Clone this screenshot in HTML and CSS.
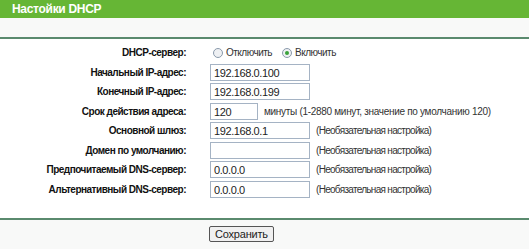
FILE: index.html
```html
<!DOCTYPE html>
<html lang="ru">
<head>
    <meta charset="UTF-8" />
    <title>Настойки DHCP</title>
    <link rel="stylesheet" href="styles.css">
</head>
<body>
    <div class="panel">
        <div class="title">Настойки DHCP</div>
        <div class="band"></div>

        <div class="form">
            <div class="row">
                <label>DHCP-сервер:</label>
                <div class="field">
                    <span class="radio"></span><span class="opt">Отключить</span>
                    <span class="radio checked"></span><span class="opt">Включить</span>
                </div>
            </div>
            <div class="row">
                <label>Начальный IP-адрес:</label>
                <div class="field"><input type="text" value="192.168.0.100"></div>
            </div>
            <div class="row">
                <label>Конечный IP-адрес:</label>
                <div class="field"><input type="text" value="192.168.0.199"></div>
            </div>
            <div class="row">
                <label>Срок действия адреса:</label>
                <div class="field"><input type="text" class="short" value="120"><span class="note minutes">минуты (1-2880 минут, значение по умолчанию 120)</span></div>
            </div>
            <div class="row">
                <label>Основной шлюз:</label>
                <div class="field"><input type="text" value="192.168.0.1"><span class="note">(Необязательная настройка)</span></div>
            </div>
            <div class="row">
                <label>Домен по умолчанию:</label>
                <div class="field"><input type="text" value=""><span class="note">(Необязательная настройка)</span></div>
            </div>
            <div class="row">
                <label>Предпочитаемый DNS-сервер:</label>
                <div class="field"><input type="text" value="0.0.0.0"><span class="note">(Необязательная настройка)</span></div>
            </div>
            <div class="row">
                <label>Альтернативный DNS-сервер:</label>
                <div class="field"><input type="text" value="0.0.0.0"><span class="note">(Необязательная настройка)</span></div>
            </div>
        </div>

        <div class="footer">
            <button>Сохранить</button>
        </div>
    </div>
</body>
</html>
```

FILE: styles.css
```css
body {
    margin: 0;
    background: #fff;
    font-family: "Liberation Sans", Arial, sans-serif;
    font-size: 10px;
    color: #000;
}

.panel {
    width: 529px;
}

/* Заголовок */
.title {
    height: 18px;
    line-height: 19px;
    background: #66b635;
    color: #fff;
    font-size: 12px;
    font-weight: bold;
    letter-spacing: -0.3px;
    padding-left: 12px;
}

.band {
    height: 19px;
    background: #f8f9f8;
    border-bottom: 2px solid #5a8a6e;
}

/* Форма */
.form {
    padding-top: 4px;
    height: 175px;
}

.row {
    display: flex;
    align-items: center;
    height: 19.5px;
}

.row label {
    width: 186px;
    text-align: right;
    font-weight: bold;
    letter-spacing: -0.5px;
    color: #111;
}

.field {
    display: flex;
    align-items: center;
    padding-left: 24px;
    white-space: nowrap;
}

input {
    width: 100px;
    height: 17px;
    box-sizing: border-box;
    border: 1px solid #a5b3c4;
    padding: 1px 3px 0;
    font-family: "Liberation Sans", Arial, sans-serif;
    font-size: 11px;
    letter-spacing: -0.4px;
    color: #222;
}

input.short {
    width: 48px;
}

.note {
    margin-left: 6px;
    letter-spacing: -0.7px;
    color: #333;
}

.note.minutes {
    letter-spacing: -0.3px;
}

.radio {
    width: 8px;
    height: 8px;
    border: 1px solid #8a9aab;
    border-radius: 50%;
    background: #eef0f3;
    margin: 0 3px 0 3px;
    position: relative;
}

.radio.checked::after {
    content: "";
    position: absolute;
    left: 2px;
    top: 2px;
    width: 4px;
    height: 4px;
    border-radius: 50%;
    background: #3aa23a;
}

.opt {
    margin-right: 7px;
    letter-spacing: -0.5px;
    color: #333;
}

/* Кнопка */
.footer {
    border-top: 2px solid #5a8a6e;
    background: #f8f9f8;
    height: 30px;
    padding-left: 209px;
    padding-top: 6px;
}

button {
    font-family: "Liberation Sans", Arial, sans-serif;
    font-size: 11px;
    letter-spacing: -0.2px;
    height: 16px;
    padding: 0 5px;
    border: 1px solid #555;
    border-radius: 2px;
    background: #f0f0f0;
    color: #222;
}
```
